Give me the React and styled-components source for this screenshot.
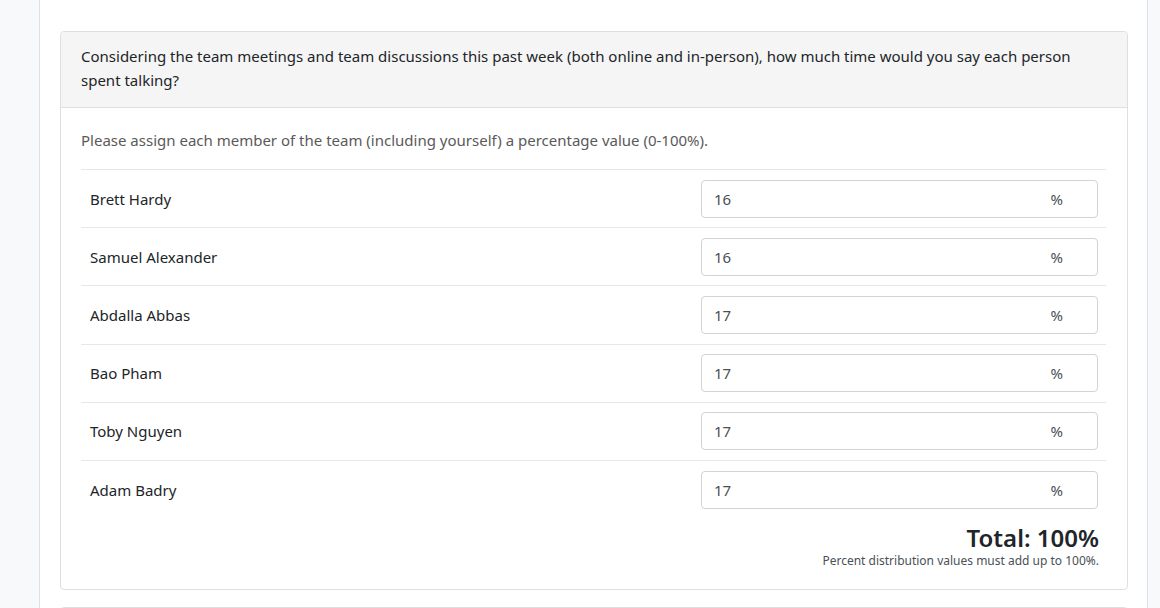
import React from 'react'
import styled, { createGlobalStyle } from 'styled-components'

const GlobalStyle = createGlobalStyle`
  html, body {
    margin: 0;
    padding: 0;
    background: #f8f9fa;
    font-family: "Noto Sans", "Open Sans", Arial, sans-serif;
    color: #212529;
  }
  * { box-sizing: border-box; }
`

const people = [
  { name: 'Brett Hardy', value: 16 },
  { name: 'Samuel Alexander', value: 16 },
  { name: 'Abdalla Abbas', value: 17 },
  { name: 'Bao Pham', value: 17 },
  { name: 'Toby Nguyen', value: 17 },
  { name: 'Adam Badry', value: 17 },
]

function App() {
  return (
    <>
      <GlobalStyle />
      <Page>
        <Main>
          <Card>
            <CardHeader>
              Considering the team meetings and team discussions this past week (both online and in-person), how much time would you say each person spent talking?
            </CardHeader>
            <CardBody>
              <Hint>Please assign each member of the team (including yourself) a percentage value (0-100%).</Hint>
              <Table>
                {people.map((p) => (
                  <Row key={p.name}>
                    <Name>{p.name}</Name>
                    <Cell>
                      <InputBox>
                        <Value defaultValue={p.value} />
                        <Suffix>%</Suffix>
                      </InputBox>
                    </Cell>
                  </Row>
                ))}
              </Table>
              <Footer>
                <Total>Total: 100%</Total>
                <Note>Percent distribution values must add up to 100%.</Note>
              </Footer>
            </CardBody>
          </Card>
          <NextCard />
        </Main>
      </Page>
    </>
  )
}

const Page = styled.div`
  height: 608px;
  overflow: hidden;
  padding-left: 39px;
  display: flex;
`

const Main = styled.div`
  width: 1109px;
  background: #fff;
  border-left: 1px solid #dee2e6;
  border-right: 1px solid #dee2e6;
  padding: 31px 20px 0 20px;
`

const Card = styled.div`
  border: 1px solid #dfdfdf;
  border-radius: 4px;
  width: 1068px;
`

const CardHeader = styled.div`
  background: #f5f5f5;
  border-bottom: 1px solid #dfdfdf;
  padding: 12px 20px 15px 20px;
  font-size: 15px;
  line-height: 24px;
  border-radius: 4px 4px 0 0;
`

const CardBody = styled.div`
  padding: 20px 21px 20px 20px;
`

const Hint = styled.div`
  color: #5a5a5a;
  font-size: 15px;
  line-height: 24px;
  margin-bottom: 17px;
`

const Table = styled.div``

const Row = styled.div`
  display: grid;
  grid-template-columns: 1fr 413px;
  align-items: center;
  border-top: 1px solid #e7e7e7;
  height: 58.2px;
`

const Name = styled.div`
  padding-left: 9px;
  font-size: 15px;
`

const Cell = styled.div`
  padding: 0 8px;
`

const InputBox = styled.div`
  display: flex;
  align-items: center;
  height: 38px;
  border: 1px solid #ced4da;
  border-radius: 4px;
  padding: 0 34px 0 12px;
  background: #fff;
`

const Value = styled.input`
  flex: 1;
  border: none;
  outline: none;
  font: inherit;
  font-size: 15px;
  color: #495057;
  padding: 0;
  min-width: 0;
`

const Suffix = styled.span`
  font-size: 15px;
  color: #495057;
`

const Footer = styled.div`
  text-align: right;
  padding-right: 7px;
  padding-top: 5px;
`

const Total = styled.div`
  font-size: 24px;
  font-weight: 600;
  line-height: 30px;
`

const Note = styled.div`
  font-size: 12px;
  color: #495057;
  line-height: 16px;
`

const NextCard = styled.div`
  margin-top: 17px;
  border: 1px solid #dfdfdf;
  border-radius: 4px;
  height: 40px;
  width: 1068px;
`

export default App
